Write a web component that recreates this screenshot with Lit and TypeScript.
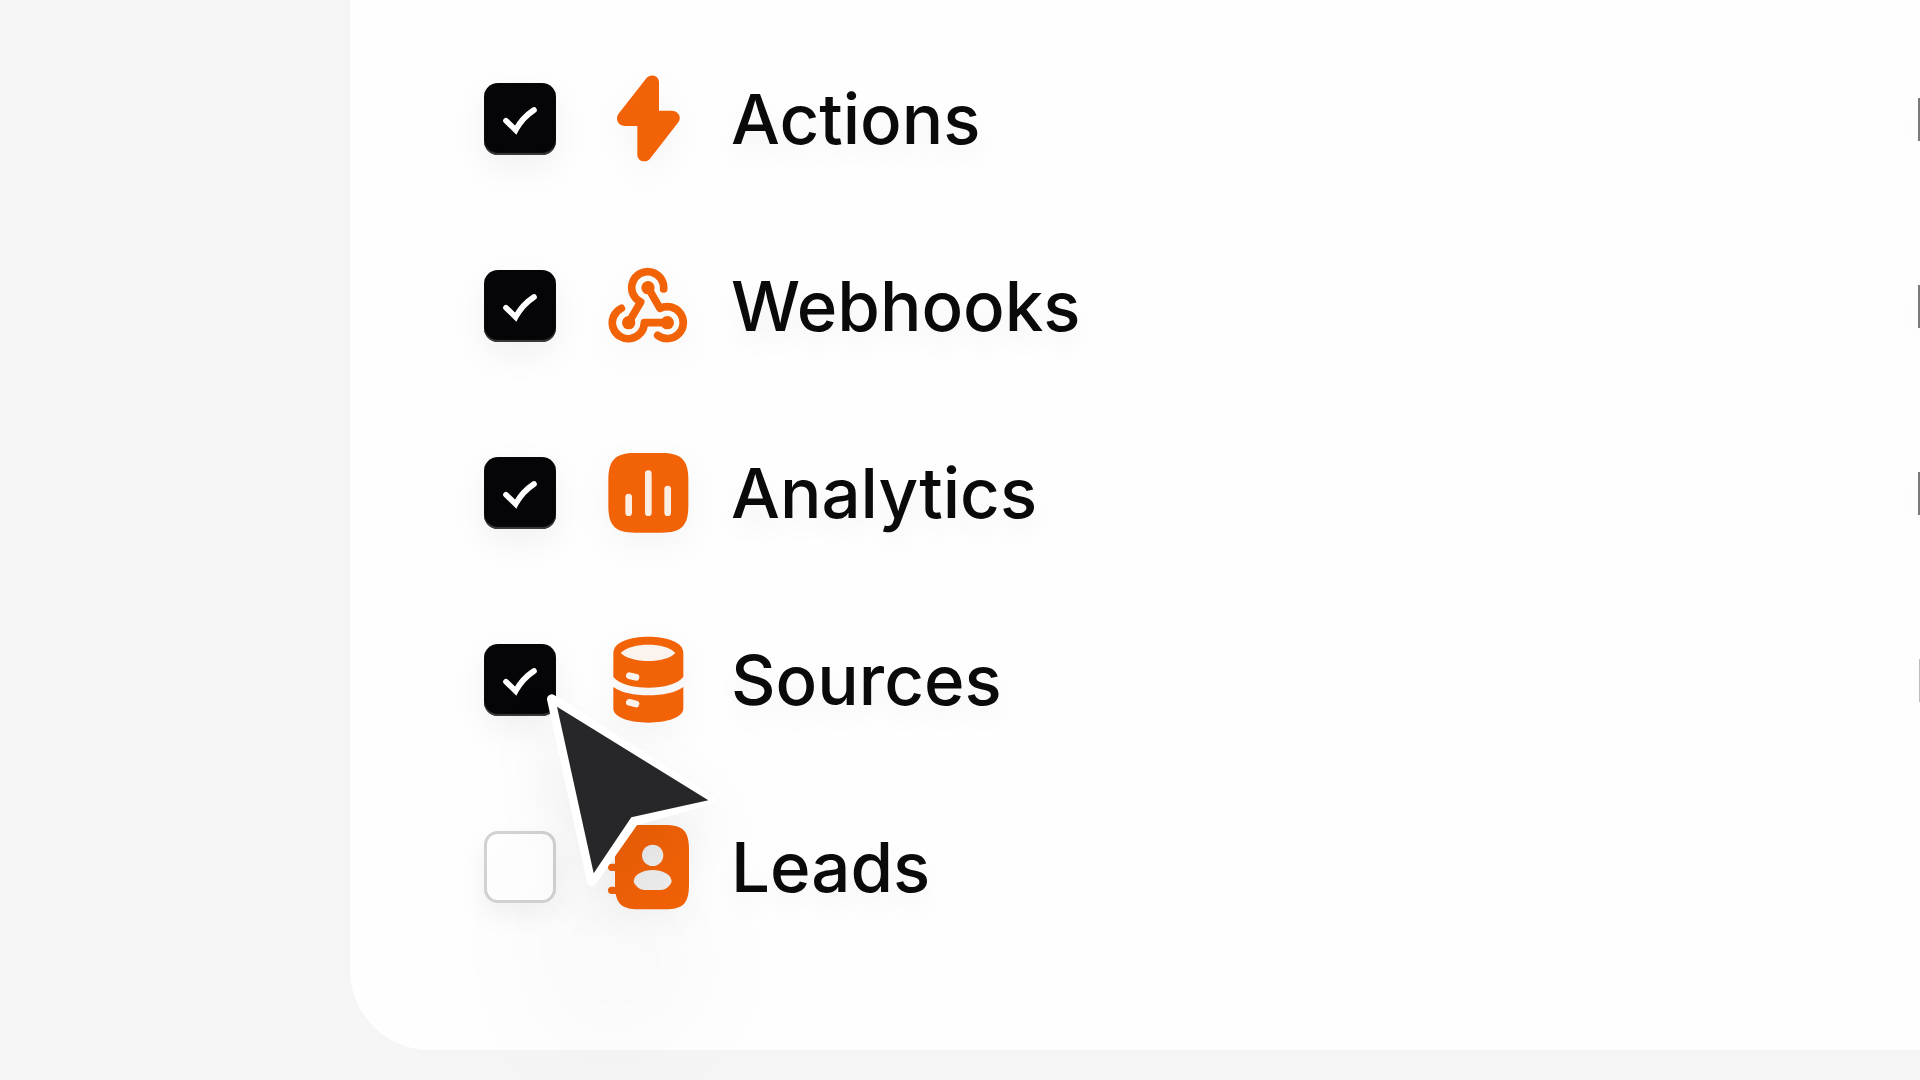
import { LitElement, html, css, svg } from "lit";
import { customElement, state } from "lit/decorators.js";
import { classMap } from "lit/directives/class-map.js";

interface Permission {
  id: string;
  label: string;
  checked: boolean;
  trailing: "full" | "faint" | "none";
}

const boltIcon = html`<svg class="icon" viewBox="420 33 288 288" aria-hidden="true">
  <path fill="#f26207" d="M597 67V152H634C655 152 666 171 655 187L570 296C558 311 532 304 532 284V198H496C474 198 465 178 475 162L559 55C571 40 597 46 597 67Z"/>
</svg>`;

const webhookIcon = html`<svg class="icon" viewBox="420 54 288 288" aria-hidden="true">
  <g fill="none" stroke="#f26207" stroke-width="23" stroke-linecap="round" stroke-linejoin="round">
    <path d="M611 147A48 48 0 1 0 542 186L506 248"/>
    <path d="M564 143L600 205A48 48 0 1 1 593 286"/>
    <path d="M484 205A48 48 0 1 0 553 248H622"/>
  </g>
  <g fill="#f26207"><circle cx="564" cy="143" r="20"/><circle cx="506" cy="248" r="20"/><circle cx="622" cy="248" r="20"/></g>
</svg>`;

const chartIcon = html`<svg class="icon" viewBox="420 42 288 288" aria-hidden="true">
  <path fill="#f26207" d="M525 66H605C664 66 685 87 685 146V225C685 284 664 305 605 305H525C466 305 445 284 445 225V146C445 87 466 66 525 66Z"/>
  <path fill="none" stroke="#fdeee4" stroke-width="20" stroke-linecap="round" d="M506 198V245M565 128V245M623 174V245"/>
</svg>`;

const databaseIcon = html`<svg class="icon" viewBox="420 33 288 288" aria-hidden="true">
  <path fill="#f26207" d="M460 96C460 62 512 47 565 47S670 62 670 96V168C652 190 612 200 565 200S478 190 460 168Z"/>
  <path fill="#fbf3ee" d="M482 96C500 78 532 71 565 71S630 78 646 96C630 113 598 120 565 120S500 113 482 96Z"/>
  <path fill="#f26207" d="M460 198C484 215 522 223 565 223S646 215 670 198V262C670 291 618 305 565 305S460 291 460 262Z"/>
  <path fill="none" stroke="#fbf3ee" stroke-width="20" stroke-linecap="round" d="M508 164L528 169M508 244L528 249"/>
</svg>`;

const contactsIcon = html`<svg class="icon" viewBox="420 414 288 288" aria-hidden="true">
  <path fill="#f26207" d="M537 432H615C670 432 687 450 687 508V609C687 667 670 685 615 685H537C482 685 465 667 465 609V508C465 450 482 432 537 432Z"/>
  <path fill="none" stroke="#f26207" stroke-width="22" stroke-linecap="round" d="M455 490H476M455 559H476M455 628H476"/>
  <circle cx="578" cy="523" r="32" fill="#eeeeee"/>
  <path fill="#eeeeee" d="M521 600C524 579 549 567 578 567S632 579 635 600C634 612 618 627 602 627H554C538 627 522 612 521 600Z"/>
</svg>`;

const icons: Record<string, unknown> = {
  actions: boltIcon,
  webhooks: webhookIcon,
  analytics: chartIcon,
  sources: databaseIcon,
  leads: contactsIcon,
};

@customElement("app-root")
export class AppRoot extends LitElement {
  static styles = css`
    :host {
      display: flex;
      box-sizing: border-box;
      min-height: 100vh;
      padding: 0 0 30px 350px;
      background: #f5f5f5;
      color: #0a0a0b;
      font-family: Inter, "Liberation Sans", sans-serif;
      overflow: hidden;
    }
    .card {
      flex: 1;
      box-sizing: border-box;
      padding: 71px 0 135px 134px;
      background: #fefefe;
      border-bottom-left-radius: 80px;
    }
    .list {
      display: flex;
      flex-direction: column;
      gap: 91px;
      margin: 0;
      padding: 0;
      list-style: none;
    }
    .row {
      position: relative;
      display: flex;
      align-items: center;
      height: 96px;
    }
    .check {
      display: grid;
      flex: none;
      width: 72px;
      height: 72px;
      margin-right: 44px;
    }
    .box {
      grid-area: 1 / 1;
      appearance: none;
      box-sizing: border-box;
      width: 72px;
      height: 72px;
      margin: 0;
      border: 3px solid #d2d2d3;
      border-radius: 14px;
      background: #fefefe;
      box-shadow: 0 12px 28px rgba(0, 0, 0, 0.06);
    }
    .box:checked {
      border: 0;
      background: #050507;
      box-shadow: inset 0 -2px 1px #3c3c3e, 0 12px 36px rgba(0, 0, 0, 0.06);
    }
    .tick {
      grid-area: 1 / 1;
      width: 72px;
      height: 72px;
      pointer-events: none;
    }
    .icon {
      flex: none;
      width: 96px;
      height: 96px;
      margin-right: 35px;
      filter: drop-shadow(0 12px 16px rgba(0, 0, 0, 0.04));
    }
    .label {
      flex: 1;
      font-size: 69px;
      font-weight: 500;
      line-height: 96px;
      text-shadow: 0 14px 24px rgba(0, 0, 0, 0.05);
    }
    .trailing {
      width: 2px;
      height: 43px;
      background: #7a7a7a;
      box-shadow: 0 8px 28px rgba(0, 0, 0, 0.1);
    }
    .trailing.faint {
      width: 1px;
      background: #bdbdbd;
    }
    .pointer {
      position: absolute;
      z-index: 1;
      left: -24px;
      top: 49px;
      width: 280px;
      height: 260px;
      overflow: visible;
      pointer-events: none;
      filter: drop-shadow(0 32px 32px rgba(0, 0, 0, 0.07))
        drop-shadow(0 170px 60px rgba(0, 0, 0, 0.04));
    }
  `;

  @state() private items: Permission[] = [
    { id: "actions", label: "Actions", checked: true, trailing: "full" },
    { id: "webhooks", label: "Webhooks", checked: true, trailing: "full" },
    { id: "analytics", label: "Analytics", checked: true, trailing: "full" },
    { id: "sources", label: "Sources", checked: true, trailing: "faint" },
    { id: "leads", label: "Leads", checked: false, trailing: "none" },
  ];

  private toggle(id: string) {
    this.items = this.items.map((i) => (i.id === id ? { ...i, checked: !i.checked } : i));
  }

  private renderTick(checked: boolean) {
    return html`<svg class="tick" viewBox="72 69 216 216" aria-hidden="true">
      ${checked
        ? svg`<path fill="none" stroke="#fff" stroke-width="17" stroke-linecap="round" d="M138 182L167 210C180 186 202 163 222 150"/>`
        : null}
    </svg>`;
  }

  private renderPointer() {
    return html`<svg class="pointer" viewBox="0 0 840 780" aria-hidden="true">
      <path fill="#fff" stroke="#fff" stroke-width="28" stroke-linejoin="round" d="M275 54L748 356L522 421L395 602Z"/>
      <path fill="#272729" d="M291 77L745 358L514 409L401 577Z"/>
    </svg>`;
  }

  private renderItem(item: Permission) {
    return html`<li class="row">
      <span class="check">
        <input class="box" type="checkbox" id=${item.id} .checked=${item.checked} @change=${() => this.toggle(item.id)} />
        ${this.renderTick(item.checked)}
      </span>
      ${icons[item.id]}
      <label class="label" for=${item.id}>${item.label}</label>
      ${item.trailing === "none"
        ? null
        : html`<span class=${classMap({ trailing: true, faint: item.trailing === "faint" })}></span>`}
      ${item.id === "sources" ? this.renderPointer() : null}
    </li>`;
  }

  render() {
    return html`<main class="card">
      <ul class="list">
        ${this.items.map((item) => this.renderItem(item))}
      </ul>
    </main>`;
  }
}
